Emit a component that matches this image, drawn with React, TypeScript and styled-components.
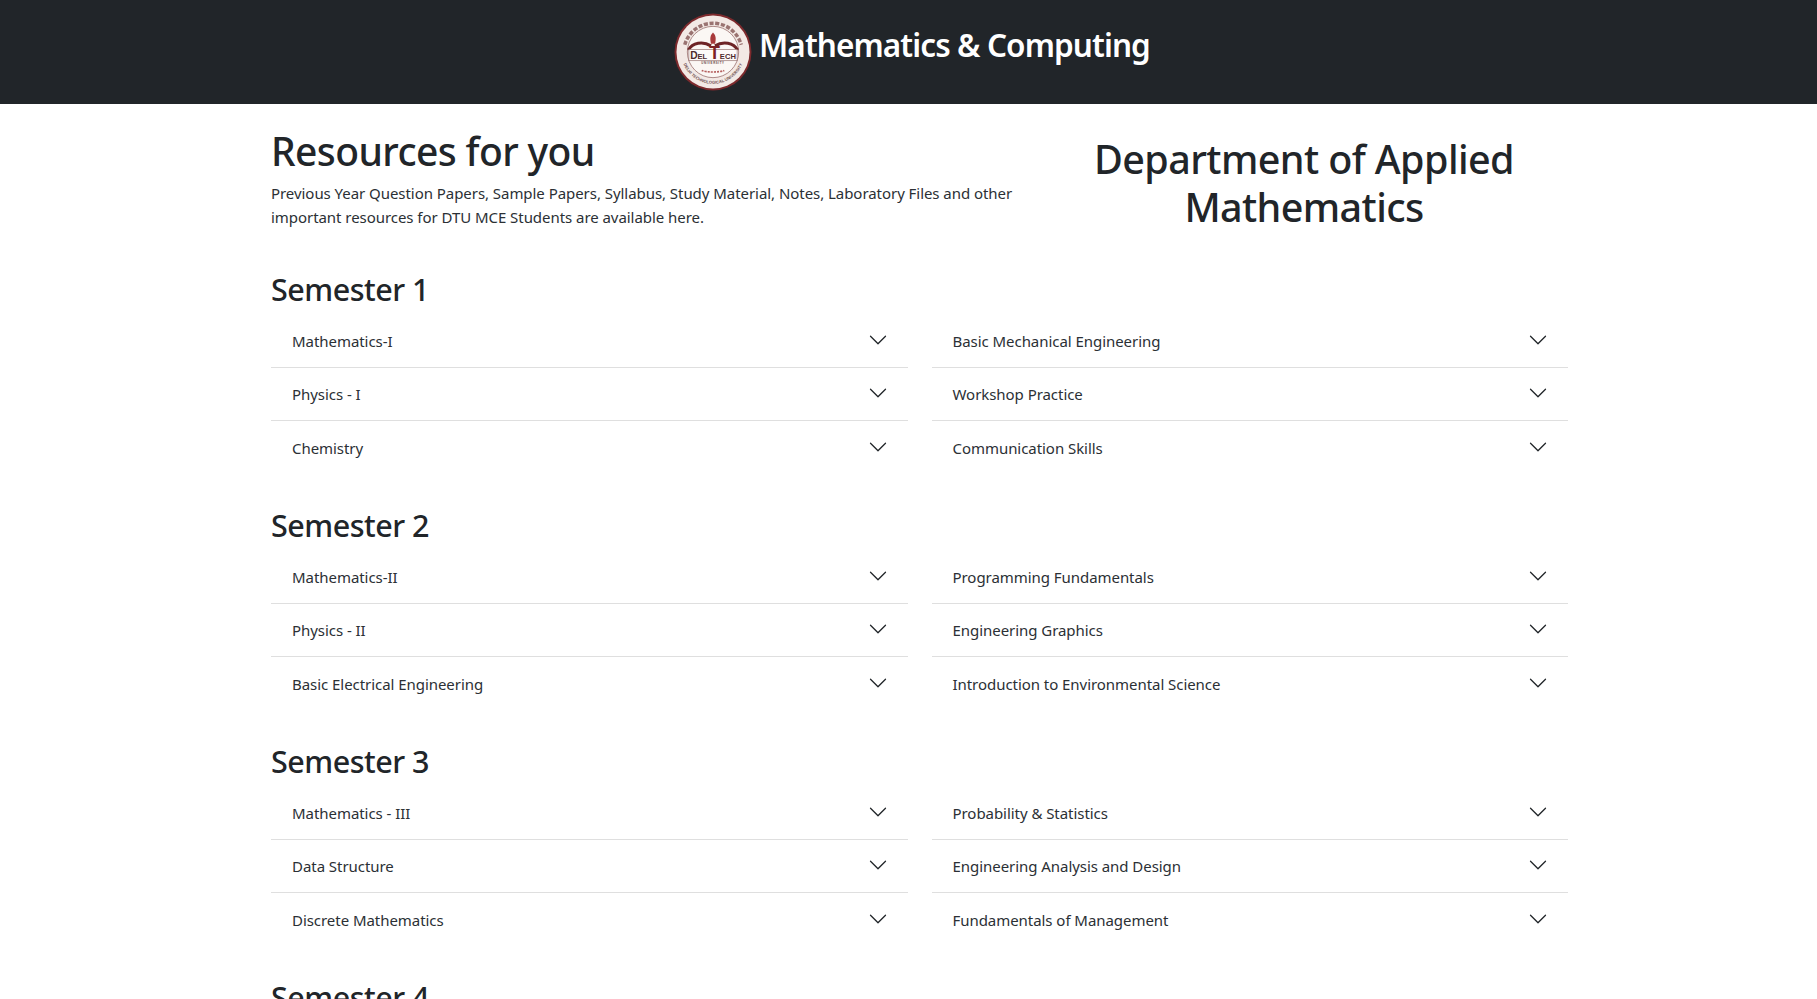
import React from 'react';
import styled, { createGlobalStyle } from 'styled-components';

const semesters = [
    {
        title: 'Semester 1',
        left: ['Mathematics-I', 'Physics - I', 'Chemistry'],
        right: ['Basic Mechanical Engineering', 'Workshop Practice', 'Communication Skills'],
    },
    {
        title: 'Semester 2',
        left: ['Mathematics-II', 'Physics - II', 'Basic Electrical Engineering'],
        right: ['Programming Fundamentals', 'Engineering Graphics', 'Introduction to Environmental Science'],
    },
    {
        title: 'Semester 3',
        left: ['Mathematics - III', 'Data Structure', 'Discrete Mathematics'],
        right: ['Probability & Statistics', 'Engineering Analysis and Design', 'Fundamentals of Management'],
    },
];

const Logo = () => (
    <LogoSvg viewBox='0 0 76 76'>
        <defs>
            <path id='logo-ring-bottom' d='M7 38a31 31 0 0 0 62 0' />
        </defs>
        <circle cx='38' cy='38' r='37.5' fill='#7d2a2d' />
        <circle cx='38' cy='38' r='35.6' fill='#f3e9e5' />
        <circle cx='38' cy='38' r='25' fill='#fbf7f4' stroke='#a7817f' strokeWidth='0.9' />
        <path d='M10.5 31a28.5 28.5 0 0 1 55 0' fill='none' stroke='#9a7371' strokeWidth='3.4' strokeDasharray='4 1.6' />
        <LogoRingText>
            <textPath href='#logo-ring-bottom' startOffset='50%' textAnchor='middle'>
                DELHI TECHNOLOGICAL UNIVERSITY
            </textPath>
        </LogoRingText>
        <path d='M14 36C18 29 28 27 36 32' fill='none' stroke='#6e2426' strokeWidth='3' />
        <path d='M62 36C58 29 48 27 40 32' fill='none' stroke='#6e2426' strokeWidth='3' />
        <path d='M38 19c3 3 3 6 2 11h-4c-1-5-1-8 2-11z' fill='#a8393a' />
        <rect x='14.5' y='35.5' width='47' height='11' fill='#fdfaf8' stroke='#8b6361' strokeWidth='0.6' />
        <LogoText x='38' y='44.5' textAnchor='middle'>
            <tspan fontSize='10'>D</tspan>EL <tspan fontSize='17' fill='#7d2225'>T</tspan>ECH
        </LogoText>
        <LogoSmallText x='38' y='50' textAnchor='middle'>
            UNIVERSITY
        </LogoSmallText>
        <path d='M27 56c5 2 17 2 22 0' fill='none' stroke='#b5605f' strokeWidth='1.6' strokeDasharray='2 1' />
    </LogoSvg>
);

const Chevron = () => (
    <ChevronSvg viewBox='0 0 16 16' fill='#212529'>
        <path
            fillRule='evenodd'
            d='M1.646 4.646a.5.5 0 0 1 .708 0L8 10.293l5.646-5.647a.5.5 0 0 1 .708.708l-6 6a.5.5 0 0 1-.708 0l-6-6a.5.5 0 0 1 0-.708z'
        />
    </ChevronSvg>
);

const SubjectList = ({ items }: { items: string[] }) => (
    <div>
        {items.map((item) => (
            <Subject key={item}>
                <span>{item}</span>
                <Chevron />
            </Subject>
        ))}
    </div>
);

const App = () => {
    return (
        <>
            <GlobalStyle />
            <Header>
                <Logo />
                <HeaderTitle>Mathematics &amp; Computing</HeaderTitle>
            </Header>
            <Main>
                <Intro>
                    <div>
                        <IntroTitle>Resources for you</IntroTitle>
                        <IntroText>
                            Previous Year Question Papers, Sample Papers, Syllabus, Study Material, Notes, Laboratory
                            Files and other important resources for DTU MCE Students are available here.
                        </IntroText>
                    </div>
                    <Department>Department of Applied Mathematics</Department>
                </Intro>
                {semesters.map((semester) => (
                    <Semester key={semester.title}>
                        <SemesterTitle>{semester.title}</SemesterTitle>
                        <Columns>
                            <SubjectList items={semester.left} />
                            <SubjectList items={semester.right} />
                        </Columns>
                    </Semester>
                ))}
                <Semester>
                    <SemesterTitle>Semester 4</SemesterTitle>
                </Semester>
            </Main>
        </>
    );
};

const GlobalStyle = createGlobalStyle`
    html, body {
        margin: 0;
        height: 100%;
        overflow: hidden;
        background: #fff;
    }
    body {
        font-family: "Noto Sans", "Open Sans", sans-serif;
        color: #212529;
    }
`;

const Header = styled.header`
    height: 104px;
    background: #212529;
    display: flex;
    align-items: center;
    padding-left: 674px;
    gap: 7px;
`;

const LogoSvg = styled.svg`
    width: 78px;
    height: 78px;
    flex-shrink: 0;
`;

const LogoText = styled.text`
    font-family: "Liberation Sans", sans-serif;
    font-size: 7.4px;
    font-weight: 700;
    fill: #4d2a2b;
`;

const LogoSmallText = styled.text`
    font-family: "Liberation Sans", sans-serif;
    font-size: 2.8px;
    font-weight: 700;
    letter-spacing: 0.6px;
    fill: #6a4a49;
`;

const LogoRingText = styled.text`
    font-family: "Liberation Sans", sans-serif;
    font-size: 4px;
    font-weight: 700;
    fill: #70504f;
`;

const HeaderTitle = styled.h1`
    margin: 0 0 14px;
    color: #fff;
    font-size: 31.5px;
    font-weight: 600;
    line-height: 1.2;
    letter-spacing: -0.9px;
`;

const Main = styled.main`
    width: 1297px;
    margin-left: 271px;
`;

const Intro = styled.section`
    display: grid;
    grid-template-columns: 746px 526px;
    column-gap: 24px;
    padding: 23px 0 7px;
`;

const IntroTitle = styled.h2`
    margin: 0 0 6px;
    font-size: 39px;
    font-weight: 500;
    line-height: 48px;
    letter-spacing: -0.6px;
`;

const IntroText = styled.p`
    margin: 0;
    font-size: 15px;
    line-height: 24px;
    letter-spacing: -0.05px;
    color: #2b3035;
`;

const Department = styled.h2`
    margin: 8px 0 0;
    text-align: center;
    font-size: 39.5px;
    font-weight: 500;
    line-height: 48px;
    letter-spacing: -0.6px;
`;

const Semester = styled.section`
    margin-top: 31.5px;
`;

const SemesterTitle = styled.h3`
    margin: 0 0 7.5px;
    font-size: 30.5px;
    font-weight: 500;
    line-height: 38px;
    letter-spacing: -0.5px;
`;

const Columns = styled.div`
    display: grid;
    grid-template-columns: 1fr 1fr;
    column-gap: 24px;
`;

const Subject = styled.div`
    height: 53px;
    box-sizing: border-box;
    padding: 0 20px 0 21px;
    display: flex;
    align-items: center;
    justify-content: space-between;
    font-size: 15px;
    letter-spacing: -0.05px;
    color: #2b3035;
    border-bottom: 1px solid #dfdfdf;

    &:last-child {
        border-bottom: none;
    }
`;

const ChevronSvg = styled.svg`
    width: 20px;
    height: 20px;
    flex-shrink: 0;
    margin-top: -2px;
`;

export default App;
